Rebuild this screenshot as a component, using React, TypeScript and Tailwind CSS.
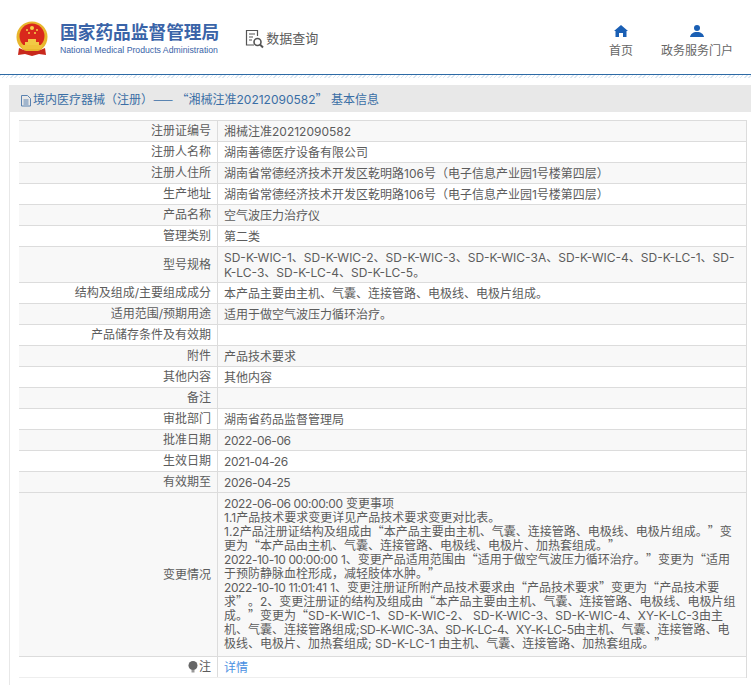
const rows: [string, string][] = [
  ["注册证编号", "湘械注准20212090582"],
  ["注册人名称", "湖南善德医疗设备有限公司"],
  ["注册人住所", "湖南省常德经济技术开发区乾明路106号（电子信息产业园1号楼第四层）"],
  ["生产地址", "湖南省常德经济技术开发区乾明路106号（电子信息产业园1号楼第四层）"],
  ["产品名称", "空气波压力治疗仪"],
  ["管理类别", "第二类"],
  ["型号规格", "SD-K-WIC-1、SD-K-WIC-2、SD-K-WIC-3、SD-K-WIC-3A、SD-K-WIC-4、SD-K-LC-1、SD-K-LC-3、SD-K-LC-4、SD-K-LC-5。"],
  ["结构及组成/主要组成成分", "本产品主要由主机、气囊、连接管路、电极线、电极片组成。"],
  ["适用范围/预期用途", "适用于做空气波压力循环治疗。"],
  ["产品储存条件及有效期", ""],
  ["附件", "产品技术要求"],
  ["其他内容", "其他内容"],
  ["备注", ""],
  ["审批部门", "湖南省药品监督管理局"],
  ["批准日期", "2022-06-06"],
  ["生效日期", "2021-04-26"],
  ["有效期至", "2026-04-25"],
];

const changes = [
  "2022-06-06 00:00:00 变更事项",
  "1.1产品技术要求变更详见产品技术要求变更对比表。",
  "1.2产品注册证结构及组成由“本产品主要由主机、气囊、连接管路、电极线、电极片组成。”变更为“本产品由主机、气囊、连接管路、电极线、电极片、加热套组成。”",
  "2022-10-10 00:00:00 1、变更产品适用范围由“适用于做空气波压力循环治疗。”变更为“适用于预防静脉血栓形成，减轻肢体水肿。”",
  "2022-10-10 11:01:41 1、变更注册证所附产品技术要求由“产品技术要求”变更为“产品技术要求”。2、变更注册证的结构及组成由“本产品主要由主机、气囊、连接管路、电极线、电极片组成。”变更为“SD-K-WIC-1、SD-K-WIC-2、 SD-K-WIC-3、SD-K-WIC-4、XY-K-LC-3由主机、气囊、连接管路组成;SD-K-WIC-3A、SD-K-LC-4、XY-K-LC-5由主机、气囊、连接管路、电极线、电极片、加热套组成; SD-K-LC-1 由主机、气囊、连接管路、加热套组成。”",
];

// quotes and dashes have to come from the CJK font to stay full width,
// dates and the long model list run a little narrower than Inter sets them
function Cjk({ text }: { text: string }) {
  return (
    <>
      {text.split(/([“”—]+|\d{4}-\d\d-\d\d(?: \d\d:\d\d:\d\d)?|SD-K-WIC-3A、SD-K-LC-4、XY-K-LC-5)/).map((part, i) => {
        if (i % 2 === 0) return part;
        return /\d/.test(part) ? (
          <span key={i} className="tracking-[-0.4px]">{part}</span>
        ) : (
          <span key={i} className="font-['Noto_Sans_CJK_SC'] leading-[0]">{part}</span>
        );
      })}
    </>
  );
}

function Emblem() {
  return (
    <svg width="34" height="36" viewBox="0 0 34 36" className="shrink-0">
      <circle cx="17" cy="16" r="15.5" fill="#e8b62c" />
      <circle cx="17" cy="15" r="12.5" fill="#d9281c" />
      <path d="M6 24h22l-2 4H8z" fill="#f0c23a" />
      <path d="M10 21h14v3H10zM13 18h8v3h-8z" fill="#f2c945" />
      <path d="M4 27l7 3h12l7-3 1 7-7-1-7 2-7-2-7 1z" fill="#c8281c" />
      <circle cx="17" cy="7" r="2" fill="#f6d24a" />
      <circle cx="12" cy="9" r="1" fill="#f6d24a" />
      <circle cx="22" cy="9" r="1" fill="#f6d24a" />
      <circle cx="14" cy="12" r="1" fill="#f6d24a" />
      <circle cx="20" cy="12" r="1" fill="#f6d24a" />
    </svg>
  );
}

function QueryIcon() {
  return (
    <svg width="20" height="20" viewBox="0 0 20 20" fill="none" stroke="#555" className="shrink-0">
      <path d="M9 16H1.500V1.500h11V7" strokeWidth="1.200" />
      <path d="M4 5h6M4 8h4M4 11h3" strokeWidth="1.200" />
      <circle cx="12.500" cy="13" r="3.500" strokeWidth="1.600" />
      <path d="M15 15.500l3 3" strokeWidth="2" />
    </svg>
  );
}

function DocIcon() {
  return (
    <svg width="12" height="13" viewBox="0 0 12 13" fill="none" stroke="#5a82b0" className="shrink-0">
      <path d="M1.500 12V1.500h6l3 3V12z" />
      <path d="M3.500 6h5M3.500 8h5M3.500 10h5" />
    </svg>
  );
}

function Row({ label, children, shaded }: { label: string; children: React.ReactNode; shaded: boolean }) {
  return (
    <div className={`flex border-b border-[#dcdcdc] ${shaded ? "bg-[#f8f8f8]" : "bg-white"}`}>
      <div className="w-[199px] shrink-0 flex items-center justify-end pr-[6px] border-r border-[#dcdcdc] text-right">{label}</div>
      <div className="flex-1 min-h-[20px] pl-[6px] pr-[5px] pt-[3px] pb-[2px] leading-[15px]">{children}</div>
    </div>
  );
}

export default function App() {
  return (
    <div className="w-[751px] h-[686px] overflow-hidden bg-white text-[12px] text-[#5c5c5c] [text-spacing-trim:space-all] font-['Inter','Noto_Sans_CJK_SC',sans-serif]">
      <header className="h-[75px] flex items-center border-b border-[#2d6aa5]">
        <div className="flex items-center pl-[15px] pt-[3px]">
          <Emblem />
          <div className="ml-[11px] pt-[1px]">
            <div className="text-[17.700px] leading-[22px] font-bold text-[#3a64a8] whitespace-nowrap">国家药品监督管理局</div>
            <div className="text-[8.700px] leading-[13px] text-[#3a64a8] whitespace-nowrap font-['Liberation_Sans']">National Medical Products Administration</div>
          </div>
          <div className="ml-[26px] flex items-center">
            <QueryIcon />
            <span className="text-[13px] ml-px">数据查询</span>
          </div>
        </div>
        <nav className="ml-auto flex pt-[10px] text-[#666]">
          <div className="w-[50px] flex flex-col items-center mr-[15px]">
            <svg width="14" height="12" viewBox="0 0 14 12" fill="#1a5fb4"><path d="M7 0L14 6h-1.500V12H9V8H5v4H1.500V6H0z" /></svg>
            <span className="mt-[5px]">首页</span>
          </div>
          <div className="w-[72px] flex flex-col items-center mr-[18px]">
            <svg width="14" height="12" viewBox="0 0 14 12" fill="#1a5fb4"><circle cx="7" cy="3" r="3" /><path d="M0 12c.5-3 3-5 7-5s6.500 2 7 5z" /></svg>
            <span className="mt-[5px]">政务服务门户</span>
          </div>
        </nav>
      </header>
      <div className="h-[3px] mb-[7px] bg-[repeating-linear-gradient(135deg,#dbe7f2_0px,#dbe7f2_1px,#ffffff_1px,#ffffff_3px)]" />
      <main className="ml-[9px] h-[600px] bg-[#e8e8e8] pl-px">
        <div className="h-[27px] flex items-center pl-[10px] pt-[3px] text-[#3a6ea5] gap-px">
          <DocIcon />
          <span className="whitespace-nowrap"><Cjk text="境内医疗器械（注册）—— “湘械注准20212090582” 基本信息" /></span>
        </div>
        <div className="bg-white pl-[9px] pr-[4px] pt-[8px] pb-[8px]">
          <div className="border-t border-r border-[#dcdcdc]">
            {rows.map(([label, value], i) => (
              <Row key={label} label={label} shaded={i % 2 === 0}><Cjk text={value} /></Row>
            ))}
            <div className="flex border-b border-[#dcdcdc] bg-[#f8f8f8]">
              <div className="w-[199px] shrink-0 flex items-center justify-end pr-[6px] border-r border-[#dcdcdc]">变更情况</div>
              <div className="flex-1 pl-[6px] pr-[5px] pt-[4px] pb-[5px] leading-[14px]">
                {changes.map((line) => <div key={line}><Cjk text={line} /></div>)}
              </div>
            </div>
            <div className="flex border-b border-[#eee] bg-white">
              <div className="w-[199px] shrink-0 flex items-center justify-end pr-[6px] border-r border-[#dcdcdc]">
                <svg width="10" height="12" viewBox="0 0 10 12" className="shrink-0 mr-px">
                  <circle cx="5" cy="4.500" r="4.500" fill="#666" />
                  <path d="M3.500 9h3v2.500h-3z" fill="#999" />
                </svg>
                注
              </div>
              <div className="flex-1 pl-[6px] pr-[5px] pt-[3px] pb-[2px] leading-[15px] text-[#4a90e2]">详情</div>
            </div>
          </div>
        </div>
      </main>
    </div>
  );
}
